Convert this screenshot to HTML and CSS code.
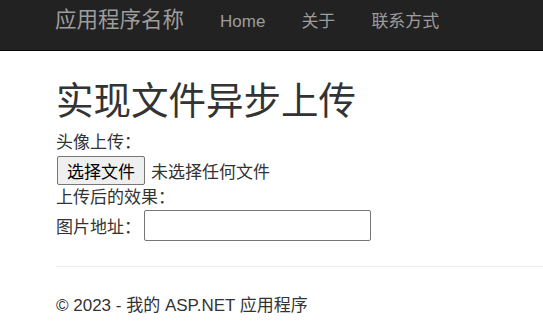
FILE: index.html
```html
<html>

<head>
	<meta charset="utf-8">
	<meta name="viewport" content="width=device-width, initial-scale=1">
	<title>实现文件异步上传 - 我的 ASP.NET 应用程序</title>
	<link rel="stylesheet" href="styles.css">
</head>

<body>
	<div class="navbar">
		<div class="navbar-inner">
			<a class="navbar-brand" href="#">应用程序名称</a>
			<ul class="nav">
				<li><a href="#">Home</a></li>
				<li><a href="#">关于</a></li>
				<li><a href="#">联系方式</a></li>
			</ul>
		</div>
	</div>

	<div class="body-content">
		<h1 class="title">实现文件异步上传</h1>
		<div class="line">头像上传：</div>
		<div class="file-row">
			<button class="file-btn" type="button">选择文件</button>
			<span class="file-name">未选择任何文件</span>
		</div>
		<div class="line">上传后的效果：</div>
		<div class="url-row">
			<label for="imgUrl">图片地址：</label>
			<input class="url-input" id="imgUrl" type="text">
		</div>

		<hr class="footer-line">
		<footer class="footer">
			<p>&copy; 2023 - 我的 ASP.NET 应用程序</p>
		</footer>
	</div>
</body>

</html>
```

FILE: styles.css
```css
body {
	margin: 0;
	padding: 0;
	font-family: "Liberation Sans", "Noto Sans CJK SC", sans-serif;
	font-size: 17px;
	color: #333;
	background-color: #fff;
}

a {
	text-decoration: none;
}

/* 顶部导航 */
.navbar {
	height: 50px;
	background-color: #222;
	border-bottom: 1px solid #080808;
}

.navbar-inner {
	display: flex;
	align-items: baseline;
	height: 100%;
	box-sizing: border-box;
	padding: 6px 0 0 55px;
	line-height: 28px;
}

.navbar-brand {
	font-size: 21.5px;
	color: #9d9d9d;
	margin-right: 18px;
}

.nav {
	display: flex;
	align-items: baseline;
	margin: 0;
	padding: 0;
	list-style: none;
}

.nav a {
	display: block;
	padding: 0 18px;
	font-size: 17px;
	color: #9d9d9d;
}

/* 内容 */
.body-content {
	padding-left: 56px;
}

.title {
	margin: 28px 0 9px 0;
	font-size: 37.5px;
	font-weight: normal;
	line-height: 44px;
}

.line {
	line-height: 22px;
}

.file-row {
	display: flex;
	align-items: center;
	height: 33px;
}

.file-btn {
	height: 29px;
	padding: 0 9px;
	font-family: inherit;
	font-size: 17px;
	color: #000;
	background-color: #efefef;
	border: 1px solid #767676;
	border-radius: 2px;
	margin: 0 6px 0 1px;
}

.url-row {
	display: flex;
	align-items: center;
	margin-top: 1px;
}

.url-input {
	width: 227px;
	height: 31px;
	box-sizing: border-box;
	margin-left: 3px;
	border: 1px solid #767676;
	border-radius: 2px;
	font-size: 16px;
}

.footer-line {
	margin: 25px 0 0 0;
	border: 0;
	border-top: 1px solid #eee;
}

.footer p {
	margin: 28px 0 0 0;
	line-height: 22px;
}
```
